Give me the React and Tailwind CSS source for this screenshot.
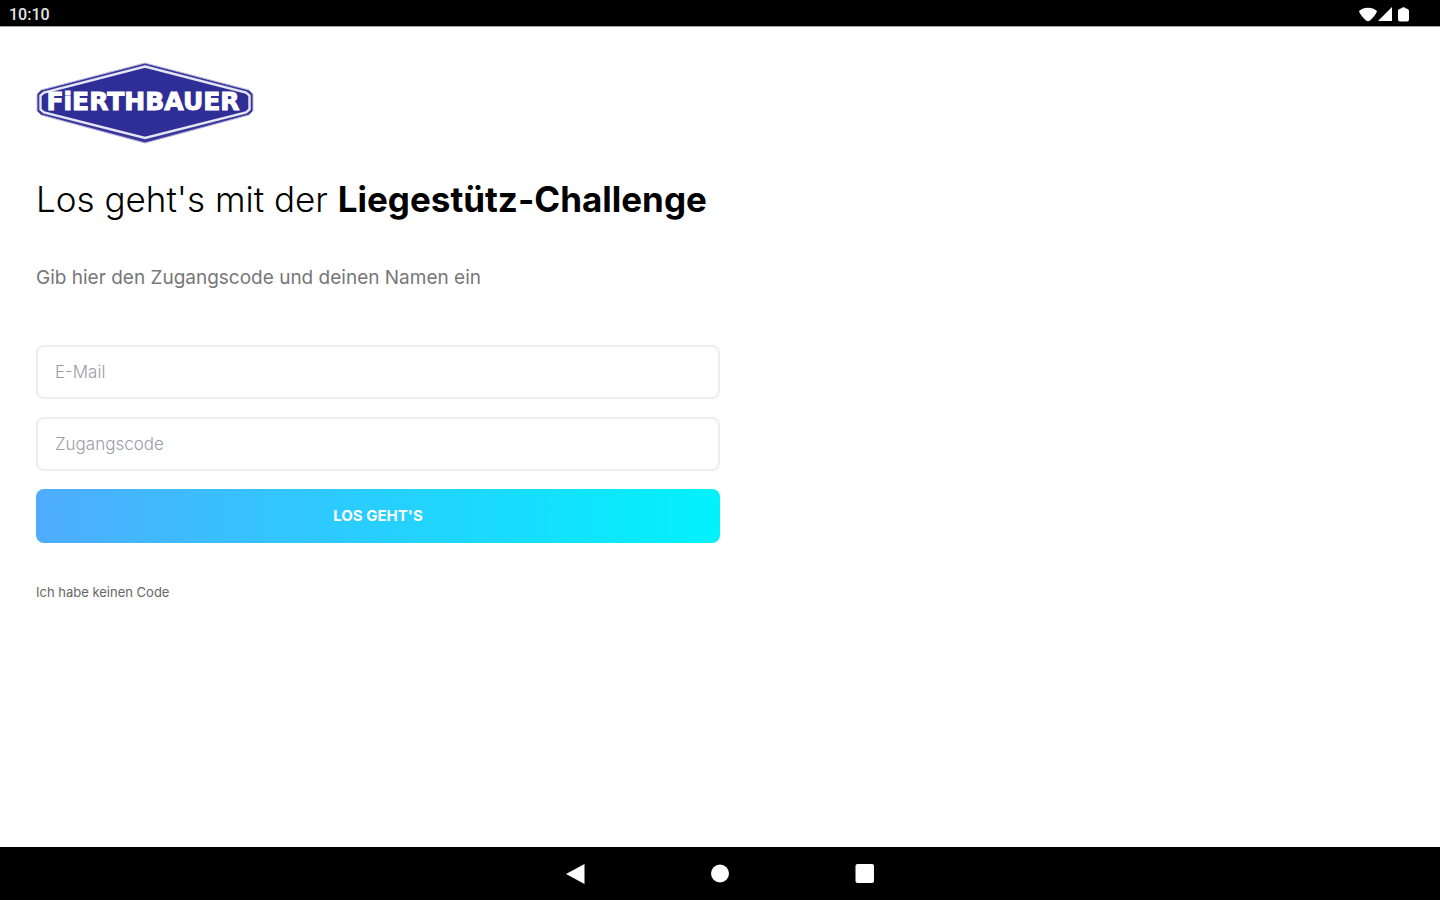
function Logo() {
  return (
    <svg viewBox="0 0 218 82" className="h-[82px] w-[218px]" role="img" aria-label="FiERTHBAUER">
      <polygon points="109,1 213,28 217,32 217,49 213,53 109,81 5,53 1,49 1,32 5,28" fill="#3a379c" stroke="#b9b7dc" strokeWidth="1" strokeLinejoin="round" />
      <polygon points="109,4.500 210,30.500 213.500,33.500 213.500,47.500 210,50.500 109,76 8,50.500 4.500,47.500 4.500,33.500 8,30.500" fill="#2f2d96" stroke="#e6e5f4" strokeWidth="2.400" />
      <text
        x="107"
        y="48"
        textAnchor="middle"
        fill="#ffffff"
        stroke="#ffffff"
        strokeWidth="1"
        className="font-['DejaVu_Sans',sans-serif] text-[25px] font-bold"
      >
        FiERTHBAUER
      </text>
    </svg>
  );
}

function StatusBar() {
  return (
    <header className="flex h-[27px] items-center justify-between border-b border-neutral-400 bg-black pl-[9px] pr-[29px] text-white">
      <time className="pt-1 font-['Roboto',sans-serif] text-[16px] leading-5 font-medium text-neutral-200">10:10</time>
      <svg viewBox="0 0 52 16" className="mt-1 h-4 w-[52px]" fill="#ffffff" aria-hidden="true">
        <path d="M0 4C4.500 -.5 13.500 -.5 18 4Q17 8 11 13.500Q9 15 7 13.500Q1 8 0 4Z" />
        <path d="M33 0V14H19Z" />
        <path d="M42 1.500Q44.500 -1 47 1.500Q50 2 50 4v8.500q0 2-2 2h-7q-2 0-2-2V4q0-2 3-2.500Z" />
      </svg>
    </header>
  );
}

function Field({ id, label, type }) {
  return (
    <input
      id={id}
      name={id}
      type={type}
      aria-label={label}
      placeholder={label}
      className="block h-[54px] w-full rounded-lg border-2 border-[#ededef] bg-white px-[17px] text-[17px] font-light text-gray-700 outline-none placeholder:text-[#9a9da6] focus:border-sky-300"
    />
  );
}

function NavigationBar() {
  return (
    <nav className="flex h-[53px] items-center justify-center gap-[120px] bg-black" aria-label="System">
      <button type="button" aria-label="Zurück" className="size-6">
        <svg viewBox="0 0 24 24" className="size-6" fill="#ffffff"><path d="M2 12 20.500 2V22Z" /></svg>
      </button>
      <button type="button" aria-label="Startseite" className="size-6">
        <svg viewBox="0 0 24 24" className="size-6" fill="#ffffff"><circle cx="12" cy="11.500" r="9" /></svg>
      </button>
      <button type="button" aria-label="Übersicht" className="size-6">
        <svg viewBox="0 0 24 24" className="size-6" fill="#ffffff"><rect x="3.500" y="2" width="18.500" height="19" rx="2" /></svg>
      </button>
    </nav>
  );
}

export default function App() {
  return (
    <div className="flex min-h-screen flex-col bg-white font-['Inter','Liberation_Sans',sans-serif]">
      <StatusBar />
      <main className="flex-1 pl-9 pt-[35px]">
        <Logo />
        <h1 className="mt-[31px] text-[35px] leading-12 font-light whitespace-nowrap text-black">
          Los geht's mit der <strong className="font-bold">Liegestütz-Challenge</strong>
        </h1>
        <p className="mt-[41px] text-[19px] leading-7 text-[#777777]">Gib hier den Zugangscode und deinen Namen ein</p>
        <div className="w-1/2 pr-[18px]">
          <form className="mt-[53px] flex flex-col gap-[18px]" onSubmit={(event) => event.preventDefault()}>
            <Field id="email" label="E-Mail" type="email" />
            <Field id="code" label="Zugangscode" type="text" />
            <button
              type="submit"
              className="h-[54px] w-full rounded-lg bg-linear-to-r/srgb from-[#4facfe] to-[#00f2fe] text-[15px] font-bold text-white"
            >
              LOS GEHT'S
            </button>
          </form>
        </div>
        <a href="#kein-code" className="mt-[41px] inline-block text-[13px] leading-4 text-[#666666]">Ich habe keinen Code</a>
      </main>
      <NavigationBar />
    </div>
  );
}
